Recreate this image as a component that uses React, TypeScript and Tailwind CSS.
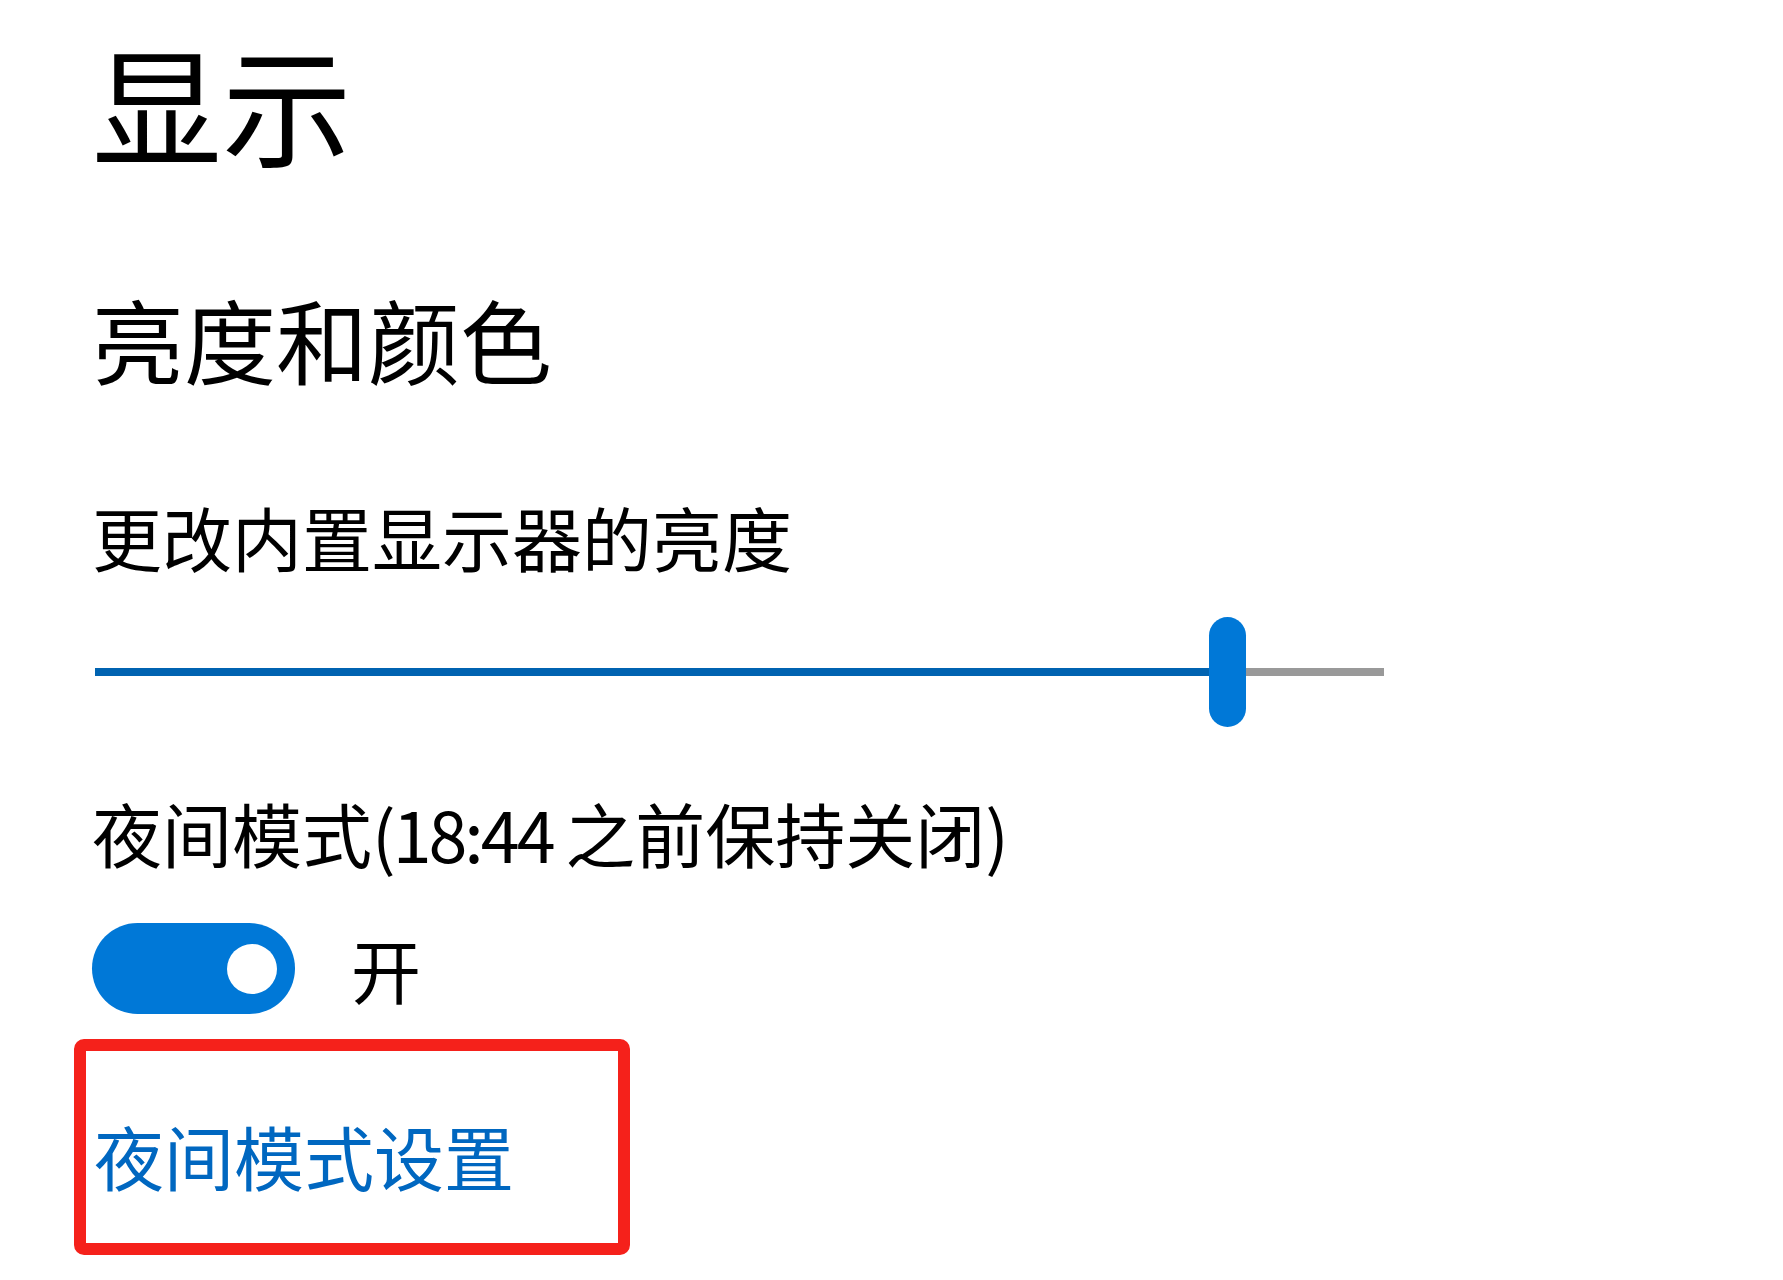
import React from 'react';

const font = 'font-["Noto_Sans_CJK_SC","Noto_Sans",sans-serif]';

const App = () => {
    return (
        <div className={`min-h-screen w-full bg-white text-black ${font}`}>
            <div className="flex flex-col items-start pl-[92px]">
                {/* Page title */}
                <h1 className="mt-[35px] text-[130px] leading-[130px] font-normal">显示</h1>

                {/* Section header */}
                <h2 className="mt-[127px] text-[92px] leading-[92px] font-normal">亮度和颜色</h2>

                <p className="mt-[118px] text-[70px] leading-[70px]">更改内置显示器的亮度</p>

                {/* Brightness slider */}
                <div className="ml-[3px] mt-[45px] flex h-[110px] w-[1289px] items-center">
                    <div className="h-[8px] flex-1 bg-[#0063b1]" />
                    <div className="h-[110px] w-[37px] rounded-full bg-[#0078d7]" />
                    <div className="h-[8px] w-[138px] bg-[#999999]" />
                </div>

                {/* Night light */}
                <p className="mt-[71px] text-[70px] leading-[70px]">
                    夜间模式<span className="tracking-[-3px]">(18:44 </span>之前保持关闭<span className="tracking-[-3px]">)</span>
                </p>

                <div className="mt-[55px] flex items-center gap-[56px]">
                    <div className="flex h-[91px] w-[203px] items-center justify-end rounded-full bg-[#0078d7] pr-[18px]">
                        <div className="h-[50px] w-[50px] rounded-full bg-white" />
                    </div>
                    <span className="text-[70px] leading-[70px]">开</span>
                </div>

                {/* Highlighted link */}
                <div className="-ml-[18px] mt-[25px] flex h-[216px] w-[556px] items-start rounded-[10px] border-[12px] border-[#f5211b] pl-[8px] pt-[70px]">
                    <a className="text-[70px] leading-[70px] text-[#0067c0]">夜间模式设置</a>
                </div>
            </div>
        </div>
    );
};

export default App;
